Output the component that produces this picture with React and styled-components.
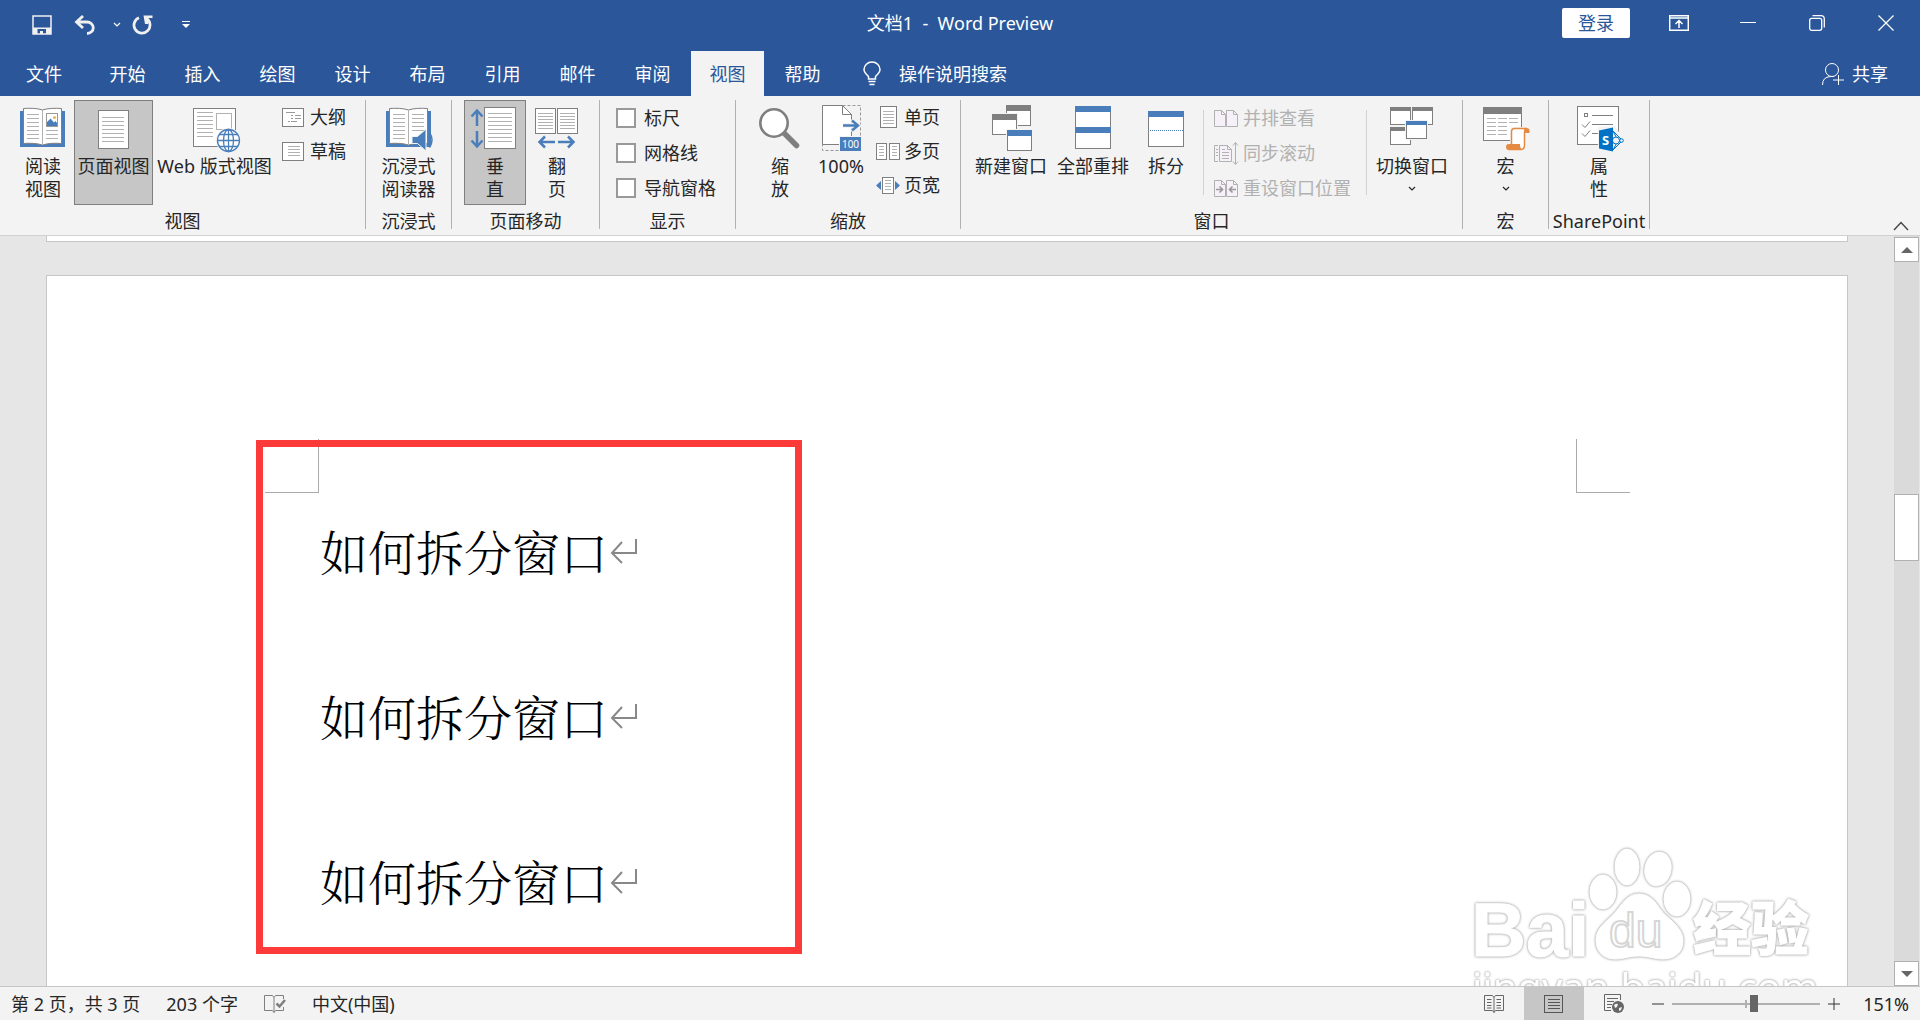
import { useState } from 'react'
import styled, { createGlobalStyle } from 'styled-components'

const GlobalStyle = createGlobalStyle`
  * {
    box-sizing: border-box;
  }
  body {
    margin: 0;
    font-family: 'Noto Sans', 'Noto Sans CJK SC', sans-serif;
    font-size: 18px;
    color: #262626;
  }
  button, input {
    font: inherit;
    color: inherit;
  }
  svg {
    display: block;
    flex: none;
  }
`

const Window = styled.div`
  display: flex;
  flex-direction: column;
  height: 100vh;
  overflow: hidden;
  background: #e6e6e6;
`

/* ---------- title bar ---------- */

const TitleBar = styled.header`
  display: grid;
  grid-template-columns: 1fr auto 1fr;
  align-items: start;
  height: 51px;
  color: #fff;
  background: #2b579a;
`

const QuickAccess = styled.div`
  display: flex;
  align-items: center;
  height: 50px;
  padding-left: 24px;
`

const QuickButton = styled.button`
  display: flex;
  align-items: center;
  justify-content: center;
  width: ${(props) => props.$width}px;
  height: 36px;
  padding: 0;
  border: 0;
  background: none;
`

const DocTitle = styled.h1`
  margin: 0;
  font-size: 18px;
  font-weight: 400;
  line-height: 46px;
  white-space: pre;
`

const WindowControls = styled.div`
  display: flex;
  justify-content: flex-end;
  align-items: center;
  height: 46px;
`

const SignIn = styled.button`
  width: 68px;
  height: 30px;
  margin-right: 14px;
  padding: 0;
  border: 0;
  border-radius: 2px;
  line-height: 30px;
  color: #2b579a;
  background: #fff;
`

const ControlButton = styled.button`
  display: flex;
  align-items: center;
  justify-content: center;
  width: 69px;
  height: 46px;
  padding: 0;
  border: 0;
  background: none;
`

/* ---------- tabs ---------- */

const TabBar = styled.nav`
  display: flex;
  align-items: stretch;
  height: 45px;
  color: #fff;
  background: #2b579a;
`

const Tab = styled.button`
  width: ${(props) => (props.$file ? 88 : 73)}px;
  margin-right: ${(props) => (props.$file ? 3 : 2)}px;
  padding: 0;
  border: 0;
  line-height: 44px;
  color: ${(props) => (props.$active ? '#2b579a' : '#fff')};
  background: ${(props) => (props.$active ? '#f3f3f3' : 'transparent')};
`

const TellMe = styled.button`
  display: flex;
  align-items: center;
  gap: 18px;
  margin-left: 22px;
  padding: 0;
  border: 0;
  line-height: 44px;
  background: none;
`

const Share = styled.button`
  display: flex;
  align-items: center;
  gap: 8px;
  margin-left: auto;
  padding: 0 32px 0 0;
  border: 0;
  line-height: 44px;
  background: none;
`

/* ---------- ribbon ---------- */

const Ribbon = styled.section`
  display: flex;
  height: 140px;
  padding-top: 4px;
  border-bottom: 1px solid #d2d2d2;
  background: #f3f3f3;
`

const Group = styled.div`
  display: flex;
  flex-direction: column;
  flex: none;
  width: ${(props) => props.$width}px;
  height: 129px;
  border-right: 1px solid #b1b1b1;
`

const GroupBody = styled.div`
  display: flex;
  justify-content: ${(props) => (props.$center ? 'center' : 'flex-start')};
  height: 105px;
  padding-left: ${(props) => props.$pad || 0}px;
`

const GroupLabel = styled.div`
  height: 24px;
  line-height: 32px;
  text-align: center;
  white-space: nowrap;
`

const BigButton = styled.button`
  display: flex;
  flex-direction: column;
  align-items: center;
  flex: none;
  width: ${(props) => props.$width}px;
  height: 105px;
  padding: 4px 0 0;
  border: 1px solid ${(props) => (props.$active ? '#7f7f7f' : 'transparent')};
  line-height: 23px;
  white-space: pre;
  background: ${(props) => (props.$active ? '#c6c6c6' : 'transparent')};

  svg {
    margin-bottom: 2px;
  }
`

const SmallColumn = styled.div`
  display: flex;
  flex-direction: column;
  padding-left: ${(props) => props.$pad || 0}px;
`

const SmallButton = styled.button`
  display: flex;
  align-items: center;
  gap: 4px;
  height: ${(props) => props.$height || 34}px;
  padding: 0;
  border: 0;
  line-height: 34px;
  white-space: nowrap;
  color: ${(props) => (props.disabled ? '#b1b1b1' : '#262626')};
  background: none;
`

const CheckRow = styled.label`
  display: flex;
  align-items: center;
  gap: 8px;
  height: 35px;
  line-height: 34px;
`

const CheckBox = styled.input`
  appearance: none;
  width: 20px;
  height: 20px;
  margin: 0;
  border: 2px solid #999;
  background: #fff;

  &:checked {
    background: #4a7ebb;
  }
`

const Divider = styled.div`
  width: 1px;
  height: 85px;
  margin: 10px 4px 0 5px;
  background: #d2d2d2;
`

const Collapse = styled.button`
  align-self: flex-end;
  margin-left: auto;
  padding: 0 11px 4px;
  border: 0;
  background: none;
`

/* ---------- document ---------- */

const Workspace = styled.main`
  display: flex;
  flex: 1;
  min-height: 0;
`

const Pages = styled.div`
  display: flex;
  flex-direction: column;
  flex: 1;
  gap: 33px;
  padding: 0 46px;
  overflow: hidden;
`

const PreviousPage = styled.div`
  flex: none;
  height: 6px;
  border: 1px solid #c6c6c6;
  border-top: 0;
  background: #fff;
`

const Page = styled.article`
  position: relative;
  flex: 1;
  padding: 163px 217px 0 218px;
  border: 1px solid #c6c6c6;
  border-bottom: 0;
  background: #fff;
`

const MarginMarks = styled.div`
  display: flex;
  justify-content: space-between;
  margin-bottom: 33px;
`

const Mark = styled.span`
  width: 54px;
  height: 54px;
  border: 0 solid #aaa;
  border-bottom-width: 1px;
  border-left-width: ${(props) => (props.$side === 'right' ? 1 : 0)}px;
  border-right-width: ${(props) => (props.$side === 'left' ? 1 : 0)}px;
`

const Paragraph = styled.p`
  display: flex;
  align-items: center;
  gap: 2px;
  margin: 0 0 115px 55px;
  font-family: 'Noto Serif CJK SC', 'Noto Sans CJK SC', serif;
  font-size: 48px;
  font-weight: 300;
  line-height: 50px;
  color: #000;
`

const RedFrame = styled.div`
  position: absolute;
  top: 164px;
  left: 209px;
  width: 546px;
  height: 514px;
  border: 7px solid #fc3a3a;
`

const Watermark = styled.svg`
  position: absolute;
  right: 24px;
  bottom: 0;
`

const ScrollBar = styled.div`
  display: flex;
  flex-direction: column;
  width: 25px;
  margin-right: 1px;
  padding-top: 1px;
  background: #dadada;
`

const ScrollButton = styled.button`
  display: flex;
  align-items: center;
  justify-content: center;
  height: 25px;
  padding: 0;
  border: 1px solid #b1b1b1;
  background: #fff;
`

const ScrollTrack = styled.div`
  display: flex;
  flex-direction: column;
  flex: 1;
`

const ScrollSpace = styled.div`
  flex: ${(props) => props.$grow};
`

const ScrollThumb = styled.div`
  height: 67px;
  border: 1px solid #b1b1b1;
  background: #fff;
`

/* ---------- status bar ---------- */

const StatusBar = styled.footer`
  display: flex;
  align-items: center;
  height: 34px;
  padding: 0 11px;
  border-top: 1px solid #c6c6c6;
  line-height: 32px;
  background: #f3f3f3;
`

const StatusText = styled.span`
  margin-right: 26px;
  white-space: nowrap;
`

const ProofButton = styled.button`
  margin-right: 26px;
  padding: 0;
  border: 0;
  background: none;
`

const ViewButtons = styled.div`
  display: flex;
  height: 33px;
  margin-left: auto;
`

const ViewButton = styled.button`
  display: flex;
  align-items: center;
  justify-content: center;
  width: 60px;
  padding: 0;
  border: 0;
  background: ${(props) => (props.$active ? '#c6c6c6' : 'transparent')};
`

const ZoomStep = styled.button`
  display: flex;
  align-items: center;
  justify-content: center;
  width: 28px;
  height: 32px;
  padding: 0;
  border: 0;
  background: none;
`

const ZoomRange = styled.input`
  appearance: none;
  width: 148px;
  height: 18px;
  margin: 0;
  background:
    linear-gradient(#b1b1b1, #b1b1b1) center / 2px 8px no-repeat,
    linear-gradient(#b1b1b1, #b1b1b1) center / 100% 2px no-repeat;

  &::-webkit-slider-thumb {
    appearance: none;
    width: 8px;
    height: 17px;
    background: #666;
  }
`

const ZoomValue = styled.output`
  width: 61px;
  text-align: right;
`

/* ---------- icons ---------- */

const BLUE = '#4a7ebb'
const GREY = '#7f7f7f'

function Lines({ x, y, w, n, step = 4, color = '#b1b1b1' }) {
  return Array.from({ length: n }, (_, i) => (
    <rect key={i} x={x} y={y + i * step} width={w} height="1" fill={color} />
  ))
}

function Win({ x, y, w, h, bar = 5, color = GREY }) {
  return (
    <>
      <rect x={x - 1} y={y - 1} width={w + 2} height={h + 2} fill="#f3f3f3" />
      <rect x={x + 0.5} y={y + 0.5} width={w - 1} height={h - 1} fill="#fff" stroke={GREY} />
      <rect x={x} y={y} width={w} height={bar} fill={color} />
    </>
  )
}

function Big({ children }) {
  return (
    <svg width="48" height="48" viewBox="0 0 48 48" fill="none" overflow="visible">
      {children}
    </svg>
  )
}

function Small({ children, width = 24 }) {
  return (
    <svg width={width} height="24" viewBox={`0 0 ${width} 24`} fill="none">
      {children}
    </svg>
  )
}

function Book() {
  return (
    <>
      <rect x="1" y="6" width="45" height="36" fill={BLUE} />
      <path
        d="M4.500 3.500C11 3 18 3.200 23.500 5C29 3.200 36 3 42.500 3.500V38.500C36 38 29 38.200 23.500 40C18 38.200 11 38 4.500 38.500Z"
        fill="#fff"
        stroke={GREY}
      />
      <path d="M23.500 5V39.500" stroke="#b1b1b1" />
      <Lines x={8} y={9} w={12} n={7} />
    </>
  )
}

const ReadIcon = () => (
  <Big>
    <Book />
    <rect x="27.500" y="8.500" width="11" height="13" fill="#fff" stroke="#999" />
    <path d="M28 21v-4l3.500-3.500 3.500 4 1.500-1.500 1.500 2v3z" fill={BLUE} />
    <circle cx="35.500" cy="12.500" r="1.600" fill="#eeb55e" />
    <Lines x={27} y={25} w={12} n={3} />
  </Big>
)

const ImmersiveIcon = () => (
  <Big>
    <Book />
    <Lines x={27} y={9} w={12} n={5} />
    <path d="M27 31.500h5.500l8.500-7.500v22l-8.500-7.500H27z" fill={BLUE} stroke="#f3f3f3" />
    <path d="M42.500 30.500q3 4.500 0 9M44.500 27.500q5 7.500 0 15" stroke={BLUE} strokeWidth="1.500" />
  </Big>
)

const PageIcon = () => (
  <Big>
    <rect x="8.500" y="5.500" width="30" height="38" fill="#fff" stroke={GREY} />
    <Lines x={12} y={12} w={22} n={7} />
  </Big>
)

const WebIcon = () => (
  <Big>
    <rect x="2.500" y="3.500" width="42" height="38" fill="#fff" stroke={GREY} />
    <Lines x={6} y={7} w={16} n={7} />
    <rect x="25.500" y="8.500" width="15" height="16" stroke="#b1b1b1" />
    <circle cx="37.500" cy="35.500" r="12.500" fill="#f3f3f3" />
    <circle cx="37.500" cy="35.500" r="11" fill="#fff" stroke={BLUE} strokeWidth="1.300" />
    <ellipse cx="37.500" cy="35.500" rx="5" ry="11" stroke={BLUE} strokeWidth="1.300" />
    <path d="M37.500 24.500v22M26.500 35.500h22M28.500 29.500h18M28.500 41.500h18" stroke={BLUE} strokeWidth="1.300" />
  </Big>
)

const VerticalIcon = () => (
  <Big>
    <rect x="13.500" y="2.500" width="31" height="41" fill="#fff" stroke={GREY} />
    <Lines x={17} y={8} w={24} n={8} />
    <path d="M6 21V6M.5 11.500L6 5.500l5.500 6M6 26v15M.5 35.500L6 41.500l5.500-6" stroke={BLUE} strokeWidth="2.500" />
  </Big>
)

const FlipIcon = () => (
  <Big>
    <rect x="2.500" y="3.500" width="20" height="25" fill="#fff" stroke={GREY} />
    <rect x="24.500" y="3.500" width="20" height="25" fill="#fff" stroke={GREY} />
    <Lines x={5} y={8} w={15} n={6} step={3} />
    <Lines x={27} y={8} w={15} n={6} step={3} />
    <path d="M22 37H6.500M12 31.500L6.500 37l5.500 5.500M25 37h15.500M35 31.500l5.500 5.500-5.500 5.500" stroke={BLUE} strokeWidth="2.500" />
  </Big>
)

const ZoomIcon = () => (
  <Big>
    <path d="M28 28L40.500 40.500" stroke={GREY} strokeWidth="5.500" strokeLinecap="round" />
    <circle cx="18" cy="18" r="13.700" fill="#fff" stroke={GREY} strokeWidth="2.600" />
  </Big>
)

const HundredIcon = () => (
  <Big>
    <rect x="5.500" y=".5" width="38" height="45" stroke="#999" strokeDasharray="3 2" />
    <path d="M5.500.5h20l9 9v30h-29z" fill="#fff" stroke={GREY} />
    <path d="M25.500.5v9h9" stroke={GREY} />
    <path d="M26 20.500h15M34.500 14.500l6.500 6-6.500 6" stroke="#f3f3f3" strokeWidth="5" />
    <path d="M26 20.500h15M35 15.500l6 5-6 5" stroke={BLUE} strokeWidth="2.500" />
    <rect x="22" y="31" width="23" height="16" fill="#f3f3f3" />
    <rect x="23" y="32" width="21" height="14" fill={BLUE} />
    <text x="33.500" y="43" fontSize="10" textAnchor="middle" fill="#fff">
      100
    </text>
  </Big>
)

const NewWindowIcon = () => (
  <Big>
    <Win x={19} y={0} w={25} h={21} bar={6} />
    <Win x={5} y={9} w={25} h={21} bar={6} />
    <Win x={20} y={25} w={25} h={21} bar={6} color={BLUE} />
  </Big>
)

const ArrangeIcon = () => (
  <Big>
    <Win x={6} y={1} w={36} h={43} bar={6} color={BLUE} />
    <rect x="6" y="22" width="36" height="6" fill={BLUE} />
  </Big>
)

const SplitIcon = () => (
  <Big>
    <Win x={6} y={6} w={36} h={36} bar={6} color={BLUE} />
    <path d="M8 25.500h33" stroke={BLUE} strokeDasharray="1 1" />
  </Big>
)

const SwitchIcon = () => (
  <Big>
    <Win x={2} y={2} w={21} h={18} bar={4} />
    <Win x={24} y={2} w={21} h={18} bar={4} />
    <Win x={2} y={22} w={21} h={18} bar={4} />
    <Win x={18} y={16} w={21} h={18} bar={4} color={BLUE} />
  </Big>
)

const MacroIcon = () => (
  <Big>
    <Win x={1} y={2} w={39} h={34} bar={7} />
    <Lines x={5} y={13} w={9} n={5} />
    <Lines x={16} y={13} w={9} n={5} />
    <Lines x={27} y={13} w={9} n={2} />
    <path
      d="M30 23h17v6h-3v11q0 5-4.500 5H27q-3-2.500-1-6h3V27q0-4 3-4z"
      fill="#f3f3f3"
      stroke="#f3f3f3"
      strokeWidth="2"
    />
    <path d="M29.500 40V27q0-3.500 3-3.500h11q-1 1.500-1 4.500v12q0 4-3 4.500H27z" fill="#fff" stroke="#e68a41" strokeWidth="1.500" />
    <path d="M43 22.800q4.500 0 4.500 2.700V28H43zM27 39h11q-.5 4 2.500 6H27q-3 0-3-3t3-3z" fill="#e68a41" />
  </Big>
)

const PropertiesIcon = () => (
  <Big>
    <rect x="2.500" y="1.500" width="41" height="38" fill="#fff" stroke={GREY} />
    <rect x="9.500" y="8.500" width="3" height="3" stroke={GREY} />
    <path d="M17 10.500h21M17 19.500h21M17 28.500h8M7 19.500l3 3 5-6M7 28.500l3 3 5-6" stroke={GREY} />
    <path d="M23 22l17-1 9 14-9 13-17-2z" fill="#f3f3f3" />
    <path d="M38 26l9.500 9.500L38 45M38 26l5 9.500L38 45M47 35.500h-9" stroke="#0072c6" />
    <circle cx="41" cy="35.500" r="3.500" fill="#f3f3f3" stroke="#0072c6" />
    <circle cx="46.500" cy="35.500" r="1.800" fill="#f3f3f3" stroke="#0072c6" />
    <path d="M24 25.500l14-3v24l-14-3z" fill="#0072c6" />
    <text x="30.500" y="40" fontSize="13" fontWeight="700" textAnchor="middle" fill="#fff">
      S
    </text>
  </Big>
)

const OutlineIcon = () => (
  <Small>
    <rect x=".5" y="3.500" width="21" height="18" fill="#fff" stroke={GREY} />
    <path d="M4 7.500h9M9 10.500h2M13 10.500h6M9 13.500h2M13 13.500h6M6 16.500h2M9 16.500h6" stroke="#999" />
  </Small>
)

const DraftIcon = () => (
  <Small>
    <rect x=".5" y="3.500" width="21" height="18" fill="#fff" stroke={GREY} />
    <Lines x={6} y={7} w={12} n={4} step={3} />
  </Small>
)

const OnePageIcon = () => (
  <Small>
    <rect x="4.500" y="1.500" width="16" height="21" fill="#fff" stroke={GREY} />
    <Lines x={7} y={6} w={11} n={5} step={3} />
  </Small>
)

const ManyPagesIcon = () => (
  <Small>
    <rect x=".5" y="4.500" width="10" height="16" fill="#fff" stroke={GREY} />
    <rect x="13.500" y="4.500" width="10" height="16" fill="#fff" stroke={GREY} />
    <Lines x={3} y={7} w={5} n={4} step={3} />
    <Lines x={16} y={7} w={5} n={4} step={3} />
  </Small>
)

const PageWidthIcon = () => (
  <Small>
    <rect x="6.500" y="4.500" width="11" height="16" fill="#fff" stroke={GREY} />
    <Lines x={9} y={7} w={6} n={4} step={3} />
    <path d="M0 12.500l5-4.500v9zM24 12.500l-5-4.500v9z" fill={BLUE} />
  </Small>
)

const TWO_SHEETS = 'M.5 4.500h7l4 4v12H.5zM12.500 4.500h7l4 4v12h-11zM7.500 4.500v4h4M19.500 4.500v4h4'

const SideBySideIcon = () => (
  <Small width={25}>
    <path d={TWO_SHEETS} fill="#f6f0f8" stroke="#b1b1b1" />
  </Small>
)

const SyncScrollIcon = () => (
  <Small width={25}>
    <path d="M5.500 4.500h8l4 4v12h-12zM13.500 4.500v4h4" fill="#f6f0f8" stroke="#b1b1b1" />
    <path d="M4 4.500H.5v16H4M2 8.500h2M2 11.500h2M2 14.500h2M8 8.500h3M8 11.500h7M8 14.500h7M8 17.500h7" stroke="#b1b1b1" />
    <path d="M21.500 2v21M19 4.500L21.500 1.500 24 4.500M19 20.500l2.500 3 2.500-3" stroke="#b1b1b1" />
  </Small>
)

const ResetIcon = () => (
  <Small width={25}>
    <path d={TWO_SHEETS} fill="#f6f0f8" stroke="#b1b1b1" />
    <path d="M2 13.500h6M5.500 10.500l3 3-3 3M22 13.500h-6M18.500 10.500l-3 3 3 3" stroke="#999" strokeWidth="1.700" />
  </Small>
)

const DropArrow = ({ color = '#262626' }) => (
  <svg width="8" height="6" viewBox="0 0 8 6" fill="none">
    <path d="M1 1l3 3 3-3" stroke={color} strokeWidth="1.200" />
  </svg>
)

const BigArrow = styled.span`
  display: flex;
  align-items: center;
  height: 23px;
`

function BaiduWatermark() {
  return (
    <Watermark width="360" height="190" viewBox="1465 797 360 190" role="img" aria-label="Baidu">
      <g
        fill="#fff"
        stroke="#fff"
        fontFamily="'Noto Sans', 'Noto Sans CJK SC', sans-serif"
        style={{ filter: 'drop-shadow(0 0 1px #aaa) drop-shadow(0 0 1px #ccc)' }}
      >
        <text x="1473" y="922" fontFamily="'Liberation Sans', sans-serif" fontSize="76" fontWeight="700">
          Bai
        </text>
        <ellipse cx="1605" cy="858" rx="13" ry="17" />
        <ellipse cx="1629" cy="833" rx="12" ry="18" />
        <ellipse cx="1660" cy="835" rx="13" ry="17" transform="rotate(12 1660 835)" />
        <ellipse cx="1679" cy="865" rx="13" ry="17" />
        <path d="M1641 860c10 0 16 7 21 15 7 10 23 17 23 32 0 12-9 18-20 18-9 0-14-3-24-3s-15 3-24 3c-11 0-19-7-19-19 0-14 14-20 22-31 6-8 11-15 21-15z" />
        <text x="1695" y="916" fontSize="58" fontWeight="900">
          经验
        </text>
        <text x="1474" y="968" fontSize="40" strokeWidth="0">
          jingyan.baidu.com
        </text>
      </g>
      <text
        x="1611"
        y="913"
        fontFamily="'Liberation Sans', sans-serif"
        fontSize="48"
        fill="#fff"
        stroke="#d6d6d6"
        strokeWidth="2"
      >
        du
      </text>
    </Watermark>
  )
}

const TABS = ['文件', '开始', '插入', '绘图', '设计', '布局', '引用', '邮件', '审阅', '视图', '帮助']
const PARAGRAPHS = ['如何拆分窗口', '如何拆分窗口', '如何拆分窗口']

function App() {
  const [tab, setTab] = useState('视图')
  const [zoom, setZoom] = useState(151)

  // the slider is split in two: 10-100% on the left half, 100-500% on the right
  const position = zoom <= 100 ? ((zoom - 10) / 90) * 50 : 50 + ((zoom - 100) / 400) * 50

  const moveZoom = (e) => {
    const p = Number(e.target.value)
    setZoom(Math.round(p <= 50 ? 10 + (p / 50) * 90 : 100 + ((p - 50) / 50) * 400))
  }

  return (
    <Window>
      <GlobalStyle />
      <TitleBar>
        <QuickAccess>
          <QuickButton $width={36} aria-label="保存">
            <svg width="20" height="20" viewBox="0 0 20 20" fill="none">
              <path d="M1 1h18v18H1z" stroke="#f0f0f0" strokeWidth="1.500" />
              <path d="M1 12.500L19 12.500V19H14V14H5.500v5H1zM8 16h3v3H8z" fill="#f0f0f0" />
            </svg>
          </QuickButton>
          <QuickButton $width={50} aria-label="撤消">
            <svg width="22" height="20" viewBox="0 0 22 20" fill="none">
              <path d="M2 7h11a6 5.500 0 010 11.500M9 1L2.500 7 9 13" stroke="#f0f0f0" strokeWidth="2.800" />
            </svg>
          </QuickButton>
          <QuickButton $width={14} aria-label="撤消列表">
            <DropArrow color="#fff" />
          </QuickButton>
          <QuickButton $width={36} aria-label="重复">
            <svg width="21" height="20" viewBox="0 0 21 20" fill="none">
              <path d="M7 2.700A8 8 0 1014.500 3.500" stroke="#f0f0f0" strokeWidth="2.800" />
              <path d="M11.500.5h9V3h-4.500v6h-3z" fill="#f0f0f0" />
            </svg>
          </QuickButton>
          <QuickButton $width={52} aria-label="自定义快速访问工具栏">
            <svg width="8" height="8" viewBox="0 0 8 8" fill="#fff">
              <path d="M0 0h8v1H0zM0 3h8L4 7z" />
            </svg>
          </QuickButton>
        </QuickAccess>
        <DocTitle>{'文档1  -  Word Preview'}</DocTitle>
        <WindowControls>
          <SignIn>登录</SignIn>
          <ControlButton aria-label="功能区显示选项">
            <svg width="20" height="16" viewBox="0 0 20 16" fill="none">
              <path d="M.7.7h18.600v14.600H.7zM1 3h18M10 13V6M6.500 9L10 5.500 13.500 9" stroke="#fff" strokeWidth="1.500" />
            </svg>
          </ControlButton>
          <ControlButton aria-label="最小化">
            <svg width="16" height="2" viewBox="0 0 16 2">
              <rect width="16" height="1" fill="#fff" />
            </svg>
          </ControlButton>
          <ControlButton aria-label="还原">
            <svg width="16" height="16" viewBox="0 0 16 16" fill="none">
              <rect x=".7" y="3.300" width="12" height="12" rx="2" stroke="#fff" strokeWidth="1.300" />
              <path d="M3.500.7h8.500q3.300 0 3.300 3.300v8.500" stroke="#fff" strokeWidth="1.300" />
            </svg>
          </ControlButton>
          <ControlButton aria-label="关闭">
            <svg width="16" height="16" viewBox="0 0 16 16" fill="none">
              <path d="M.5.5l15 15M15.500.5l-15 15" stroke="#fff" strokeWidth="1.300" />
            </svg>
          </ControlButton>
        </WindowControls>
      </TitleBar>

      <TabBar>
        {TABS.map((name) => (
          <Tab key={name} $file={name === '文件'} $active={name === tab} onClick={() => setTab(name)}>
            {name}
          </Tab>
        ))}
        <TellMe>
          <svg width="18" height="25" viewBox="0 0 18 25" fill="none">
            <path d="M5.500 18v-2.500C3 13 1 11.500 1 8.500a8 7.500 0 0116 0c0 3-2 4.500-4.500 7V18z" stroke="#fff" strokeWidth="1.500" />
            <path d="M5.500 20.500h7M6.500 23.500h5" stroke="#fff" strokeWidth="1.500" />
          </svg>
          操作说明搜索
        </TellMe>
        <Share>
          <svg width="22" height="24" viewBox="0 0 22 24" fill="none">
            <circle cx="10" cy="8" r="6.500" stroke="#fff" />
            <path d="M.5 23q0-8 8-8.500h3M16.500 13v10M11 18h11" stroke="#fff" />
          </svg>
          共享
        </Share>
      </TabBar>

      <Ribbon>
        <Group $width={366}>
          <GroupBody $pad={12}>
            <BigButton $width={62}>
              <ReadIcon />
              {'阅读\n视图'}
            </BigButton>
            <BigButton $width={79} $active>
              <PageIcon />
              页面视图
            </BigButton>
            <BigButton $width={123}>
              <WebIcon />
              Web 版式视图
            </BigButton>
            <SmallColumn $pad={6}>
              <SmallButton>
                <OutlineIcon />
                大纲
              </SmallButton>
              <SmallButton>
                <DraftIcon />
                草稿
              </SmallButton>
            </SmallColumn>
          </GroupBody>
          <GroupLabel>视图</GroupLabel>
        </Group>

        <Group $width={86}>
          <GroupBody $center>
            <BigButton $width={66}>
              <ImmersiveIcon />
              {'沉浸式\n阅读器'}
            </BigButton>
          </GroupBody>
          <GroupLabel>沉浸式</GroupLabel>
        </Group>

        <Group $width={148}>
          <GroupBody $pad={12}>
            <BigButton $width={62} $active>
              <VerticalIcon />
              {'垂\n直'}
            </BigButton>
            <BigButton $width={62}>
              <FlipIcon />
              {'翻\n页'}
            </BigButton>
          </GroupBody>
          <GroupLabel>页面移动</GroupLabel>
        </Group>

        <Group $width={136}>
          <GroupBody $pad={16}>
            <SmallColumn>
              {['标尺', '网格线', '导航窗格'].map((name) => (
                <CheckRow key={name}>
                  <CheckBox type="checkbox" />
                  {name}
                </CheckRow>
              ))}
            </SmallColumn>
          </GroupBody>
          <GroupLabel>显示</GroupLabel>
        </Group>

        <Group $width={225}>
          <GroupBody $pad={18}>
            <BigButton $width={52}>
              <ZoomIcon />
              {'缩\n放'}
            </BigButton>
            <BigButton $width={70}>
              <HundredIcon />
              100%
            </BigButton>
            <SmallColumn>
              <SmallButton>
                <OnePageIcon />
                单页
              </SmallButton>
              <SmallButton>
                <ManyPagesIcon />
                多页
              </SmallButton>
              <SmallButton>
                <PageWidthIcon />
                页宽
              </SmallButton>
            </SmallColumn>
          </GroupBody>
          <GroupLabel>缩放</GroupLabel>
        </Group>

        <Group $width={502}>
          <GroupBody $pad={9}>
            <BigButton $width={82}>
              <NewWindowIcon />
              新建窗口
            </BigButton>
            <BigButton $width={82}>
              <ArrangeIcon />
              全部重排
            </BigButton>
            <BigButton $width={64}>
              <SplitIcon />
              拆分
            </BigButton>
            <Divider />
            <SmallColumn $pad={6}>
              <SmallButton $height={35} disabled>
                <SideBySideIcon />
                并排查看
              </SmallButton>
              <SmallButton $height={35} disabled>
                <SyncScrollIcon />
                同步滚动
              </SmallButton>
              <SmallButton $height={35} disabled>
                <ResetIcon />
                重设窗口位置
              </SmallButton>
            </SmallColumn>
            <SmallColumn $pad={10}>
              <Divider />
            </SmallColumn>
            <BigButton $width={82}>
              <SwitchIcon />
              切换窗口
              <BigArrow>
                <DropArrow />
              </BigArrow>
            </BigButton>
          </GroupBody>
          <GroupLabel>窗口</GroupLabel>
        </Group>

        <Group $width={86}>
          <GroupBody $center>
            <BigButton $width={62}>
              <MacroIcon />
              宏
              <BigArrow>
                <DropArrow />
              </BigArrow>
            </BigButton>
          </GroupBody>
          <GroupLabel>宏</GroupLabel>
        </Group>

        <Group $width={101}>
          <GroupBody $center>
            <BigButton $width={62}>
              <PropertiesIcon />
              {'属\n性'}
            </BigButton>
          </GroupBody>
          <GroupLabel>SharePoint</GroupLabel>
        </Group>

        <Collapse aria-label="折叠功能区">
          <svg width="16" height="10" viewBox="0 0 16 10" fill="none">
            <path d="M1 9l7-7.500L15 9" stroke="#444" strokeWidth="1.400" />
          </svg>
        </Collapse>
      </Ribbon>

      <Workspace>
        <Pages>
          <PreviousPage />
          <Page>
            <MarginMarks>
              <Mark $side="left" />
              <Mark $side="right" />
            </MarginMarks>
            {PARAGRAPHS.map((text, i) => (
              <Paragraph key={i}>
                {text}
                <svg width="28" height="26" viewBox="0 0 28 26" fill="none">
                  <path d="M26 1v14H2M12 4L2 15l10 10" stroke="#888" strokeWidth="2" />
                </svg>
              </Paragraph>
            ))}
            <RedFrame />
            <BaiduWatermark />
          </Page>
        </Pages>
        <ScrollBar>
          <ScrollButton aria-label="向上滚动">
            <svg width="12" height="6" viewBox="0 0 12 6">
              <path d="M0 6l6-6 6 6z" fill="#666" />
            </svg>
          </ScrollButton>
          <ScrollTrack>
            <ScrollSpace $grow={232} />
            <ScrollThumb />
            <ScrollSpace $grow={400} />
          </ScrollTrack>
          <ScrollButton aria-label="向下滚动">
            <svg width="12" height="6" viewBox="0 0 12 6">
              <path d="M0 0l6 6 6-6z" fill="#666" />
            </svg>
          </ScrollButton>
        </ScrollBar>
      </Workspace>

      <StatusBar>
        <StatusText>第 2 页，共 3 页</StatusText>
        <StatusText>203 个字</StatusText>
        <ProofButton aria-label="校对">
          <svg width="22" height="18" viewBox="0 0 22 18" fill="none">
            <path d="M10 2.500L8.500.5H.5v15h8l1.500 2 1.500-2h8V12M10 2.500L11.500.5h8V4M10 2.500v15" stroke={GREY} />
            <path d="M12.500 8.500l3 3L21 5" stroke={GREY} strokeWidth="2.500" />
          </svg>
        </ProofButton>
        <StatusText>中文(中国)</StatusText>
        <ViewButtons>
          <ViewButton aria-label="阅读视图">
            <svg width="20" height="18" viewBox="0 0 20 18" fill="none">
              <path d="M10 2.500L8.500.5H.5v15h8l1.500 2 1.500-2h8V.5h-8zV17.500" stroke="#666" />
              <path d="M3 4.500h4.500M3 7.500h4.500M3 10.500h4.500M3 13h4.500M12.500 4.500H17M12.500 7.500H17M12.500 10.500H17M12.500 13H17" stroke="#666" />
            </svg>
          </ViewButton>
          <ViewButton $active aria-label="页面视图">
            <svg width="20" height="18" viewBox="0 0 20 18" fill="none">
              <rect x=".5" y=".5" width="18" height="17" stroke="#555" />
              <Lines x={4} y={4} w={12} n={4} step={3} color="#555" />
            </svg>
          </ViewButton>
          <ViewButton aria-label="Web 版式视图">
            <svg width="20" height="19" viewBox="0 0 20 19" fill="none">
              <path d="M7 16.500H.5V.5h16V6M3 4.500h11M3 7.500h7M3 10.500h5M3 13.500h4" stroke="#666" />
              <circle cx="14" cy="13" r="6" fill="#666" />
              <path d="M10 11q2-2 4-1l-1 3-2 1zM15 14l3-1-1 3-2 1z" fill="#f3f3f3" />
            </svg>
          </ViewButton>
        </ViewButtons>
        <ZoomStep aria-label="缩小" onClick={() => setZoom(Math.max(10, zoom - 10))}>
          <svg width="12" height="12" viewBox="0 0 12 12">
            <path d="M0 6h12" stroke="#333" />
          </svg>
        </ZoomStep>
        <ZoomRange type="range" min="0" max="100" value={position} onChange={moveZoom} aria-label="缩放级别" />
        <ZoomStep aria-label="放大" onClick={() => setZoom(Math.min(500, zoom + 10))}>
          <svg width="12" height="12" viewBox="0 0 12 12">
            <path d="M0 6h12M6 0v12" stroke="#333" />
          </svg>
        </ZoomStep>
        <ZoomValue>{zoom}%</ZoomValue>
      </StatusBar>
    </Window>
  )
}

export default App
